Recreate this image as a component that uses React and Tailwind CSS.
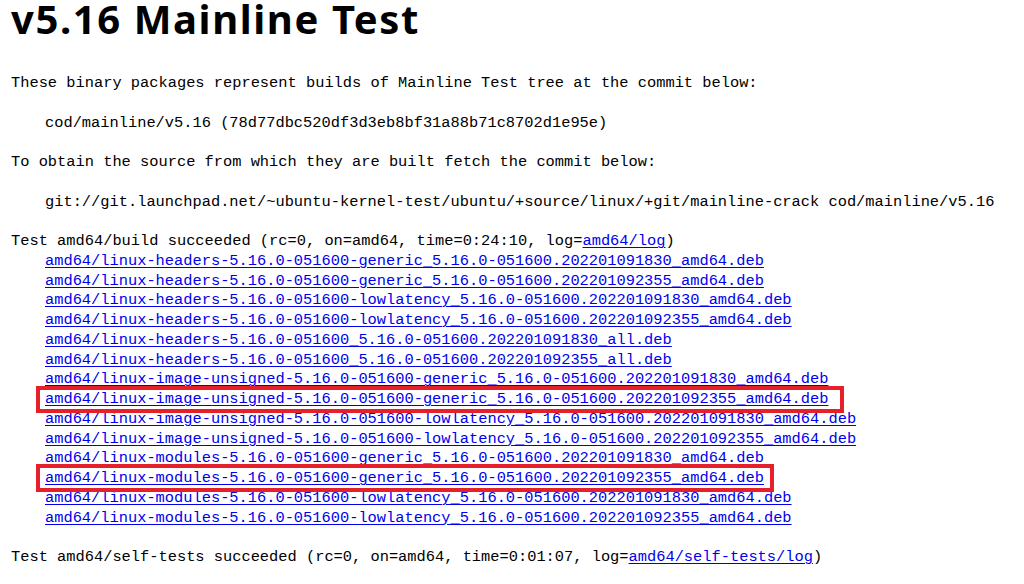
import React from "react";

const links = [
  "amd64/linux-headers-5.16.0-051600-generic_5.16.0-051600.202201091830_amd64.deb",
  "amd64/linux-headers-5.16.0-051600-generic_5.16.0-051600.202201092355_amd64.deb",
  "amd64/linux-headers-5.16.0-051600-lowlatency_5.16.0-051600.202201091830_amd64.deb",
  "amd64/linux-headers-5.16.0-051600-lowlatency_5.16.0-051600.202201092355_amd64.deb",
  "amd64/linux-headers-5.16.0-051600_5.16.0-051600.202201091830_all.deb",
  "amd64/linux-headers-5.16.0-051600_5.16.0-051600.202201092355_all.deb",
  "amd64/linux-image-unsigned-5.16.0-051600-generic_5.16.0-051600.202201091830_amd64.deb",
  "amd64/linux-image-unsigned-5.16.0-051600-generic_5.16.0-051600.202201092355_amd64.deb",
  "amd64/linux-image-unsigned-5.16.0-051600-lowlatency_5.16.0-051600.202201091830_amd64.deb",
  "amd64/linux-image-unsigned-5.16.0-051600-lowlatency_5.16.0-051600.202201092355_amd64.deb",
  "amd64/linux-modules-5.16.0-051600-generic_5.16.0-051600.202201091830_amd64.deb",
  "amd64/linux-modules-5.16.0-051600-generic_5.16.0-051600.202201092355_amd64.deb",
  "amd64/linux-modules-5.16.0-051600-lowlatency_5.16.0-051600.202201091830_amd64.deb",
  "amd64/linux-modules-5.16.0-051600-lowlatency_5.16.0-051600.202201092355_amd64.deb",
];

function Link({ children }) {
  return (
    <a className="text-[#0000ee] underline decoration-1 underline-offset-[2px]" href="#">
      {children}
    </a>
  );
}

function Row({ children, indent }) {
  return (
    <div className={"h-[19.75px] leading-[19.75px] whitespace-pre " + (indent ? "pl-[34px]" : "")}>
      {children}
    </div>
  );
}

function Blank() {
  return <div className="h-[19.75px]" />;
}

export default function App() {
  return (
    <div className="w-[1024px] h-[584px] overflow-hidden bg-white text-black pl-[11px]">
      <div className="h-[74px]">
        <h1 className="text-[40px] leading-[37px] font-bold tracking-[1.6px] [font-family:'Noto_Sans',sans-serif]">
          v5.16 Mainline Test
        </h1>
      </div>
      <div className="text-[15.37px] [font-family:'Liberation_Mono',monospace]">
        <Row>These binary packages represent builds of Mainline Test tree at the commit below:</Row>
        <Blank />
        <Row indent>cod/mainline/v5.16 (78d77dbc520df3d3eb8bf31a88b71c8702d1e95e)</Row>
        <Blank />
        <Row>To obtain the source from which they are built fetch the commit below:</Row>
        <Blank />
        <Row indent>git://git.launchpad.net/~ubuntu-kernel-test/ubuntu/+source/linux/+git/mainline-crack cod/mainline/v5.16</Row>
        <Blank />
        <Row>
          Test amd64/build succeeded (rc=0, on=amd64, time=0:24:10, log=<Link>amd64/log</Link>)
        </Row>
        {links.map((l, i) => (
          <Row indent key={i}>
            {i === 7 ? (
              <span className="relative inline-block">
                <Link>{l}</Link>
                <span className="absolute left-[-9px] right-[-16px] top-[-4px] bottom-[-3px] border-[4px] border-[#e5202a]" />
              </span>
            ) : i === 11 ? (
              <span className="relative inline-block">
                <Link>{l}</Link>
                <span className="absolute left-[-9px] right-[-10px] top-[-5px] bottom-[-3px] border-[4px] border-[#e5202a]" />
              </span>
            ) : (
              <Link>{l}</Link>
            )}
          </Row>
        ))}
        <Blank />
        <Row>
          Test amd64/self-tests succeeded (rc=0, on=amd64, time=0:01:07, log=<Link>amd64/self-tests/log</Link>)
        </Row>
      </div>
    </div>
  );
}
